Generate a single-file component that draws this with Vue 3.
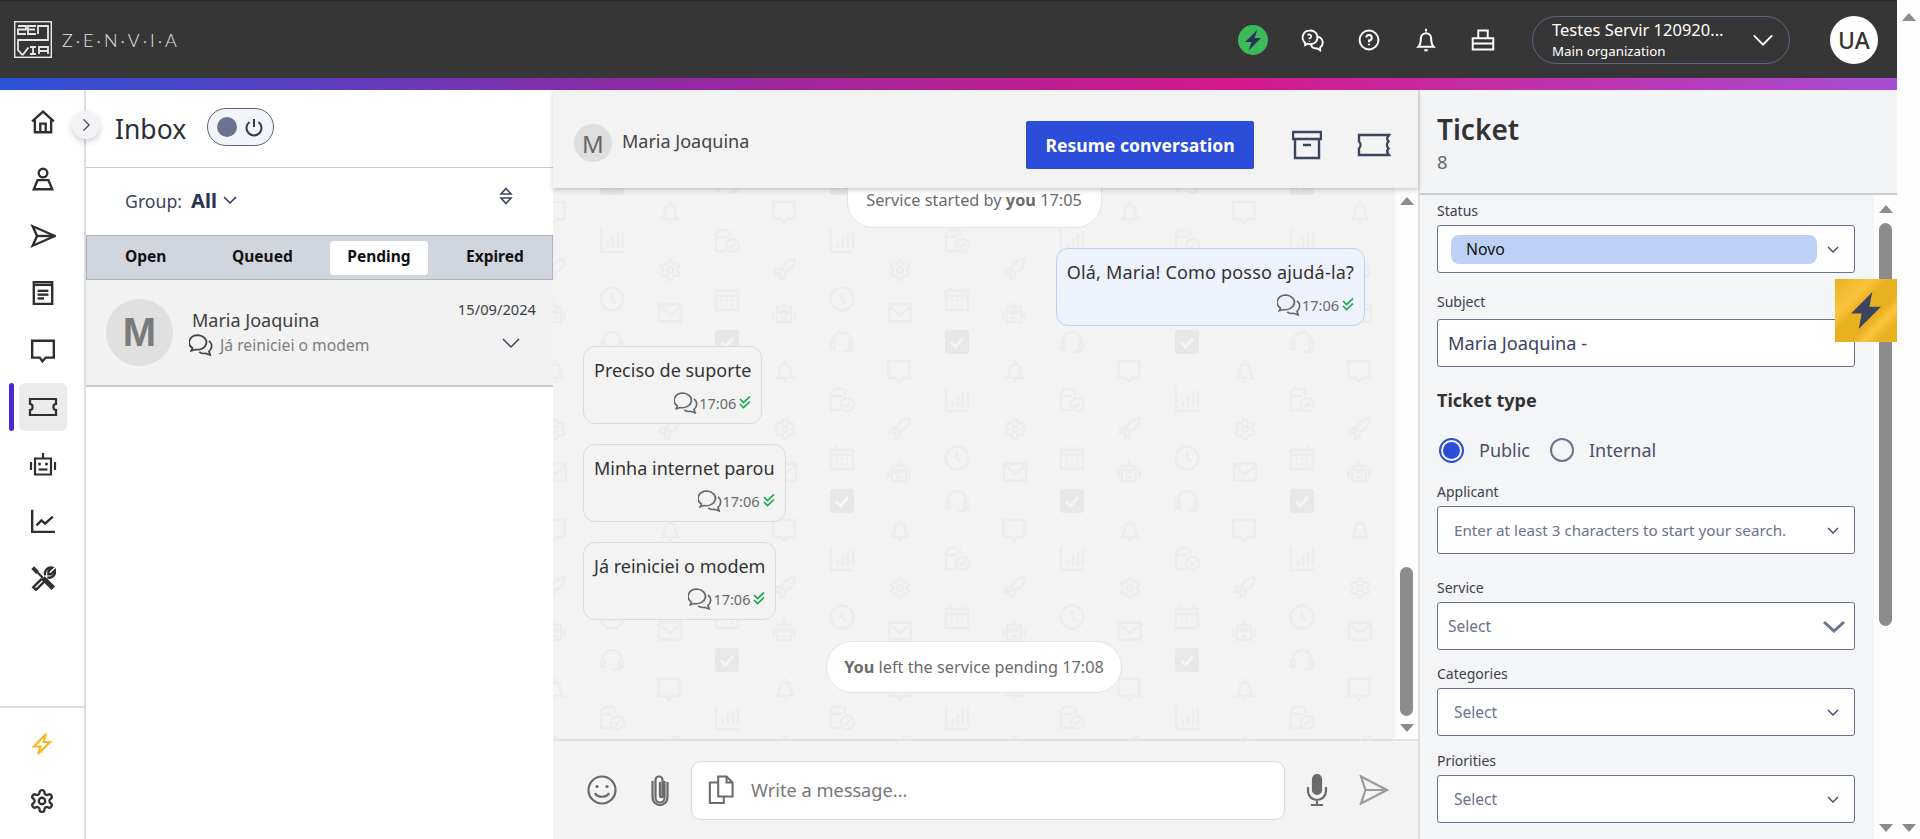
<script setup>
const tabs = [
  { label: 'Open', cls: 't-open' },
  { label: 'Queued', cls: 't-queued' },
  { label: 'Pending', cls: 't-pending' },
  { label: 'Expired', cls: 't-expired' }
]

const nav = [
  { key: 'home', w: 26, vb: '0 0 24 24', d: ['M2 11.5 12 2.5l10 9', 'M4.5 10v11.5h15V10', 'M9.5 21.5v-8h5v8'] },
  { key: 'person', w: 26, vb: '0 0 24 24', d: ['M12 2.5a4 4 0 1 0 0 8 4 4 0 0 0 0-8z', 'M7 13h10l3.5 8.5h-17z'] },
  { key: 'send', w: 26, vb: '0 0 24 24', d: ['M2.5 3 23 12 2.5 21 6.5 12z', 'M6.5 12H23'] },
  { key: 'doc', w: 26, vb: '0 0 24 24', d: ['M3.5 2h17v20h-17z', 'M3.5 4.5h17', 'M7 10h10', 'M7 13.5h10', 'M7 17h6'] },
  { key: 'chat', w: 28, vb: '0 0 24 24', d: ['M2 3.5h20v15.5h-7.5L11.5 22.5 9 19H2z'] },
  { key: 'ticket', w: 30, vb: '0 0 30 24', d: ['M2 4h26v5c-1.8 0-2.6 1.4-2.6 3s.8 3 2.6 3v5H2v-5c1.8 0 2.6-1.4 2.6-3S3.800 9 2 9z'], active: true },
  { key: 'robot', w: 30, vb: '0 0 30 24', d: ['M7 6.500h16v16H7z', 'M15 6.500V1', 'M3 10v8', 'M27 10v8', 'M10.500 17.500h9'], dots: true },
  { key: 'chart', w: 26, vb: '0 0 24 24', d: ['M2 1.500V22h21', 'M6 16l4.500-4.500 3.500 3L21 8'] },
  { key: 'tools', w: 26, vb: '0 0 24 24', d: ['M11 12.500 3 20.500l2.500 2.500 8-8', 'M14 9.500a5.500 5.500 0 0 1 6.500-7l-3.500 3.500v2.500h2.500l3.500-3.500a5.500 5.500 0 0 1-7 6.500'], tools: true }
]

const gearPath = 'M12.220 2h-.44a2 2 0 0 0-2 2v.18a2 2 0 0 1-1 1.730l-.43.25a2 2 0 0 1-2 0l-.15-.08a2 2 0 0 0-2.730.73l-.22.38a2 2 0 0 0 .73 2.730l.15.1a2 2 0 0 1 1 1.720v.51a2 2 0 0 1-1 1.740l-.15.09a2 2 0 0 0-.73 2.730l.22.38a2 2 0 0 0 2.730.73l.15-.08a2 2 0 0 1 2 0l.43.25a2 2 0 0 1 1 1.730V20a2 2 0 0 0 2 2h.44a2 2 0 0 0 2-2v-.18a2 2 0 0 1 1-1.730l.43-.25a2 2 0 0 1 2 0l.15.08a2 2 0 0 0 2.730-.73l.22-.39a2 2 0 0 0-.73-2.730l-.15-.08a2 2 0 0 1-1-1.740v-.5a2 2 0 0 1 1-1.740l.15-.09a2 2 0 0 0 .73-2.730l-.22-.38a2 2 0 0 0-2.730-.73l-.15.08a2 2 0 0 1-2 0l-.43-.25a2 2 0 0 1-1-1.730V4a2 2 0 0 0-2-2z M12 9a3 3 0 1 0 0 6 3 3 0 0 0 0-6z'

const glyphs = {
  bell: 'M12 1v2M4 19c1.500-2 3-3 3-9a5 5 0 0 1 10 0c0 6 1.500 7 3 9zM10.500 22h3',
  chat: 'M1.500 2h21v17h-7.500L12 23l-3-4H1.500z',
  chart: 'M1 0v23h23M8 19v-6M13 19V8M18 19V4M23 19V2',
  doc: 'M13 1H4l-3 4v17h10M15 1v6M1 8h11M17.500 10a6.500 6.500 0 1 0 0 13 6.500 6.500 0 0 0 0-13zM14.500 16.500l2 2 3.500-4',
  gear: gearPath,
  rocket: 'M22.500 1.500c-6-.5-10 3-13 9l4 4c6-3 9.500-7 9-13zM9.500 10.500l-6 1.500-1 4 5-1M13.500 14.500l-1.500 6-4 1 1-5M6 17a3 3 0 1 0-.1 0',
  clock: 'M12 0.500a11.500 11.500 0 1 0 0 23 11.500 11.500 0 0 0 0-23zM12 6v6.500l4 3.500',
  cal: 'M1 4h22v19H1zM1 9h22M6 0v5M18 0v5M6 13h2M11 13h2M16 13h2M6 18h2M11 18h2M16 18h2',
  mail: 'M1 3.500h22v17H1zM1 5l11 9 11-9',
  robot: 'M5 6h14v15H5zM12 6V1M1.500 10v8M22.500 10v8M8 11a1.500 1.500 0 1 0 3 0 1.500 1.500 0 0 0-3 0M13 11a1.500 1.500 0 1 0 3 0 1.500 1.500 0 0 0-3 0M9 17h6',
  headset: 'M3 14V11a9 9 0 0 1 18 0v3M1 12h3.500v7H1zM19.500 12H23v7h-3.500zM21 19v2.500h-8'
}

const halfA = [
  ['bell', 73, 12], ['chat', 187, 12], ['chart', 15, 41], ['doc', 130, 41],
  ['gear', 73, 70], ['rocket', 187, 70], ['clock', 15, 99], ['cal', 130, 99],
  ['mail', 73, 113], ['robot', 187, 113], ['headset', 15, 142], ['check', 130, 142]
]
const tile = [
  ...halfA,
  ...halfA.map(([n, x, y]) => [n, (x + 115) % 230, y + 159])
].map(([n, x, y]) => ({ n, t: `translate(${x - 12} ${y - 12})` }))

const incoming = [
  'Preciso de suporte',
  'Minha internet parou',
  'Já reiniciei o modem'
]
</script>

<template>
  <div class="root">
    <div class="page">
      <header class="topbar">
        <div class="brand">
          <svg class="logo" viewBox="0 0 38 37" fill="none" stroke="#e8e8e8" stroke-width="1.400">
            <rect x=".7" y=".7" width="36.600" height="35.600" />
            <path d="M4 5h8v3.500H4V13h8M22 5h-8v8h8M15 8.500h6M24 13V5h10v14H4v10l4 4.500h1l5.500-7M16 26h6M19 26v7M16 33h6M25 33v-7h9v7M25 30h9" stroke-width="1.800" />
          </svg>
          <span class="wordmark">Z·E·N·V·I·A</span>
        </div>
        <div class="top-actions">
          <span class="bolt-circle">
            <svg viewBox="0 0 24 24" width="24" height="24"><path d="M16.500 1.500 4 14h6.500l-3 8.500L20 10h-6.500z" fill="#2b3358" /></svg>
          </span>
          <svg class="ti" viewBox="0 0 28 28" fill="none" stroke="#fff" stroke-width="2.200">
            <path d="M11 3a8 8 0 0 0-5 14.200V20l3.200-1.800A8 8 0 1 0 11 3z" />
            <path d="M19.500 10a7 7 0 0 1 4 12.700V26l-3.500-2.200A7 7 0 0 1 12.500 19" />
            <path d="M8.800 8.700A2.300 2.300 0 1 1 11 12v1.200M11 15v.8" stroke-width="1.900" />
          </svg>
          <svg class="ti" viewBox="0 0 28 28" fill="none" stroke="#fff" stroke-width="2.300">
            <circle cx="14" cy="14" r="11" />
            <path d="M10.800 11a3.200 3.200 0 1 1 3.200 3.500V16.500M14 18.500v1.500" stroke-width="2.400" />
          </svg>
          <svg class="ti" viewBox="0 0 28 28" fill="none" stroke="#fff" stroke-width="2.300">
            <path d="M14 1v3M5 22c2-2 3-4 3-10a6 6 0 0 1 12 0c0 6 1 8 3 10zM12 26h4" />
          </svg>
          <svg class="ti" viewBox="0 0 28 28" fill="none" stroke="#fff" stroke-width="2.300">
            <path d="M8.500 12V3h11v9M2 12h24v6H2zM2 18v7h24v-7" />
          </svg>
        </div>
        <div class="org">
          <div class="org-text">
            <div class="org-name">Testes Servir 120920...</div>
            <div class="org-sub">Main organization</div>
          </div>
          <svg class="org-chev" viewBox="0 0 24 14" fill="none" stroke="#fff" stroke-width="2"><path d="M2 2l10 10L22 2" /></svg>
        </div>
        <div class="ua">UA</div>
      </header>
      <div class="rainbow"></div>

      <div class="workspace">
        <nav class="side">
          <div class="side-top">
            <div v-for="item in nav" :key="item.key" class="nav-row" :class="{ on: item.active }">
              <span v-if="item.active" class="mark"></span>
              <svg :viewBox="item.vb" :width="item.w" :height="26" fill="none" stroke="#2f2f2f" stroke-width="2.200" stroke-linejoin="miter">
                <path v-for="(p, i) in item.d" :key="i" :d="p" />
                <template v-if="item.dots">
                  <circle cx="11.500" cy="12" r="1.500" fill="#2f2f2f" stroke="none" />
                  <circle cx="18.500" cy="12" r="1.500" fill="#2f2f2f" stroke="none" />
                </template>
                <template v-if="item.tools">
                  <path d="M2.500 2.500 7 7" stroke-width="3.600" />
                  <path d="M7 7l5 5" stroke-width="2" />
                  <path d="M12 12l9.500 9.500" stroke-width="4.600" />
                </template>
              </svg>
            </div>
          </div>
          <div class="side-bottom">
            <svg class="side-bolt" viewBox="0 0 24 24" width="24" height="24" fill="none" stroke="#f5b921" stroke-width="2.200" stroke-linejoin="miter">
              <path d="M16 2 4 14.500h6.500L8 22l12-12h-6.500z" />
            </svg>
            <svg viewBox="0 0 24 24" width="26" height="26" fill="none" stroke="#2f2f2f" stroke-width="2.100"><path :d="gearPath" /></svg>
          </div>
        </nav>

        <section class="inbox">
          <button class="expand">
            <svg viewBox="0 0 10 16" width="9" height="14" fill="none" stroke="#3a3a3a" stroke-width="1.400"><path d="M1.500 1.500 8 8l-6.500 6.500" /></svg>
          </button>
          <div class="inbox-head">
            <h1>Inbox</h1>
            <div class="toggle">
              <span class="dot"></span>
              <svg viewBox="0 0 20 20" width="20" height="20" fill="none" stroke="#333a52" stroke-width="2"><path d="M10 2v8M5.500 5a7.500 7.500 0 1 0 9 0" /></svg>
            </div>
          </div>
          <div class="group">
            <span class="g-label">Group:</span>
            <span class="g-all">All</span>
            <svg viewBox="0 0 14 9" width="14" height="9" fill="none" stroke="#2a3350" stroke-width="1.500"><path d="M1 1l6 6 6-6" /></svg>
            <svg class="sort" viewBox="0 0 14 18" width="14" height="18" fill="none" stroke="#3d4460" stroke-width="1.600">
              <path d="M7 1.500 12 7H2z" />
              <path d="M2 11h10l-5 5.500z" />
            </svg>
          </div>
          <div class="tabs">
            <span v-for="t in tabs" :key="t.label" class="tab" :class="t.cls">{{ t.label }}</span>
          </div>
          <div class="conv">
            <div class="conv-av">M</div>
            <div class="conv-main">
              <div class="conv-name">Maria Joaquina</div>
              <div class="conv-prev">
                <svg viewBox="2 2 21 21" width="24" height="22" fill="none" stroke="#444" stroke-width="1.600" preserveAspectRatio="none">
                  <path d="M10 3a8 7 0 0 0-5 12.400L4 18l3.500-1.200A8 7 0 1 0 10 3z" />
                  <path d="M19.500 8.500a6.500 6.500 0 0 1 0 10l1 3.500-4-1.500a6.500 6.500 0 0 1-5.500-1.500" />
                </svg>
                <span>Já reiniciei o modem</span>
              </div>
            </div>
            <div class="conv-date">15/09/2024</div>
            <svg class="conv-chev" viewBox="0 0 18 11" width="18" height="11" fill="none" stroke="#3d4460" stroke-width="1.500"><path d="M1 1l8 8 8-8" /></svg>
          </div>
        </section>

        <section class="chat">
          <div class="chat-head">
            <div class="chat-av">M</div>
            <div class="chat-name">Maria Joaquina</div>
            <button class="resume">Resume conversation</button>
            <svg class="ch-ic" viewBox="0 0 30 30" width="30" height="30" fill="none" stroke="#3d4460" stroke-width="2.400">
              <path d="M1 2h28v7H1zM3 9v19h24V9M11 15h8" />
            </svg>
            <svg class="ch-ic2" viewBox="0 0 34 24" width="34" height="24" fill="none" stroke="#3d4460" stroke-width="2.400">
              <path d="M2 2h30c-1.800 2.200-2.600 3.500-.5 6.500-2 2-2 5 0 7-1.800 2-1.500 4.500.5 6.500H2v-6.500c2-2 2-5 0-7z" />
            </svg>
          </div>
          <div class="chat-body">
            <svg class="wall" width="842" height="552" aria-hidden="true">
              <defs>
                <pattern id="wall" x="44" y="12" width="230" height="318" patternUnits="userSpaceOnUse">
                  <g v-for="(it, i) in tile" :key="i" :transform="it.t">
                    <template v-if="it.n === 'check'">
                      <rect width="24" height="24" rx="3" fill="#e8e8e8" />
                      <path d="M6 12.500l4.500 4.500L18 8" fill="none" stroke="#f5f5f5" stroke-width="3" />
                    </template>
                    <path v-else :d="glyphs[it.n]" fill="none" stroke="#ececec" stroke-width="2.400" />
                  </g>
                </pattern>
              </defs>
              <rect width="842" height="552" fill="url(#wall)" />
            </svg>
            <div class="msgs">
              <div class="pill pill-first">Service started by <b>you</b> 17:05</div>
              <div class="bubble out">
                <div class="b-text">Olá, Maria! Como posso ajudá-la?</div>
                <div class="meta">
                  <svg viewBox="2 2 21 21" width="24" height="22" fill="none" stroke="#666" stroke-width="1.500" preserveAspectRatio="none">
                    <path d="M10 3a8 7 0 0 0-5 12.400L4 18l3.500-1.200A8 7 0 1 0 10 3z" />
                    <path d="M19.500 8.500a6.500 6.500 0 0 1 0 10l1 3.500-4-1.500a6.500 6.500 0 0 1-5.500-1.500" />
                  </svg>
                  <span>17:06</span>
                  <svg class="tick" viewBox="0 0 12 14" width="12" height="14" fill="none" stroke="#19a94a" stroke-width="1.700"><path d="M1 3l3.500 3.500L11 0.500M1 8l3.500 3.500L11 5.500" /></svg>
                </div>
              </div>
              <div v-for="m in incoming" :key="m" class="bubble in">
                <div class="b-text">{{ m }}</div>
                <div class="meta">
                  <svg viewBox="2 2 21 21" width="24" height="22" fill="none" stroke="#666" stroke-width="1.500" preserveAspectRatio="none">
                    <path d="M10 3a8 7 0 0 0-5 12.400L4 18l3.500-1.200A8 7 0 1 0 10 3z" />
                    <path d="M19.500 8.500a6.500 6.500 0 0 1 0 10l1 3.500-4-1.500a6.500 6.500 0 0 1-5.500-1.500" />
                  </svg>
                  <span>17:06</span>
                  <svg class="tick" viewBox="0 0 12 14" width="12" height="14" fill="none" stroke="#19a94a" stroke-width="1.700"><path d="M1 3l3.500 3.500L11 0.500M1 8l3.500 3.500L11 5.500" /></svg>
                </div>
              </div>
              <div class="pill pill-last"><b>You</b> left the service pending 17:08</div>
            </div>
            <div class="vbar chat-bar">
              <i class="up"></i>
              <div class="track"><b class="thumb"></b></div>
              <i class="down"></i>
            </div>
          </div>
          <div class="composer">
            <svg viewBox="0 0 30 30" width="30" height="30" fill="none" stroke="#6b6b6b" stroke-width="2.200">
              <circle cx="15" cy="15" r="13.500" />
              <circle cx="10" cy="11.500" r="1.600" fill="#6b6b6b" stroke="none" />
              <circle cx="20" cy="11.500" r="1.600" fill="#6b6b6b" stroke="none" />
              <path d="M8 18c2 5 12 5 14 0" />
            </svg>
            <svg class="clip" viewBox="0 0 20 32" width="20" height="32" fill="none" stroke="#6b6b6b" stroke-width="2.200">
              <path d="M14 7v17a4.500 4.500 0 0 1-9 0V6a3 3 0 0 1 7 0v16a1.200 1.200 0 0 1-2.500 0V8" transform="translate(.5 0)" />
              <path d="M17.500 8v15.500a7.500 7.500 0 0 1-15 0V7" />
            </svg>
            <div class="input">
              <svg viewBox="0 0 28 32" width="26" height="30" fill="none" stroke="#6b6b6b" stroke-width="2.200">
                <path d="M11 1.500h9l6.500 6.500v15H11z M20 1.500V8h6.500" />
                <path d="M11 8H2v22h15v-7" />
              </svg>
              <span>Write a message...</span>
            </div>
            <svg class="mic" viewBox="0 0 24 32" width="24" height="32" fill="none" stroke="#6b6b6b" stroke-width="2.200">
              <rect x="8" y="1" width="8" height="19" rx="4" fill="#6b6b6b" />
              <path d="M3 13v4a9 9 0 0 0 18 0v-4M12 26v5M6 31h12" />
            </svg>
            <svg class="snd" viewBox="0 0 30 30" width="30" height="30" fill="none" stroke="#9b9b9b" stroke-width="2.200">
              <path d="M2 1.500 28 15 2 28.500 6.500 15zM6.500 15H28" />
            </svg>
          </div>
        </section>

        <section class="ticket">
          <div class="ticket-main">
            <div class="ticket-head">
              <h2>Ticket</h2>
              <div class="num">8</div>
            </div>
            <div class="form">
              <label class="lab first">Status</label>
              <div class="box status">
                <span class="chip">Novo</span>
                <svg class="chev" viewBox="0 0 12 8" width="12" height="8" fill="none" stroke="#3d4460" stroke-width="1.300"><path d="M1 1l5 5 5-5" /></svg>
              </div>
              <label class="lab l-subject">Subject</label>
              <div class="box subject">Maria Joaquina -</div>
              <div class="ttype">Ticket type</div>
              <div class="radios">
                <span class="radio sel"><i></i></span>
                <span class="r-lab">Public</span>
                <span class="radio"></span>
                <span class="r-lab">Internal</span>
              </div>
              <label class="lab l-app">Applicant</label>
              <div class="box indent ph">
                Enter at least 3 characters to start your search.
                <svg class="chev" viewBox="0 0 12 8" width="12" height="8" fill="none" stroke="#3d4460" stroke-width="1.300"><path d="M1 1l5 5 5-5" /></svg>
              </div>
              <label class="lab l-service">Service</label>
              <div class="box svc">
                Select
                <svg class="big-chev" viewBox="0 0 24 14" width="24" height="14" fill="none" stroke="#6b7390" stroke-width="3"><path d="M2 2l10 9 10-9" /></svg>
              </div>
              <label class="lab l-cat">Categories</label>
              <div class="box indent sel-ph">
                Select
                <svg class="chev" viewBox="0 0 12 8" width="12" height="8" fill="none" stroke="#3d4460" stroke-width="1.300"><path d="M1 1l5 5 5-5" /></svg>
              </div>
              <label class="lab l-pri">Priorities</label>
              <div class="box indent sel-ph">
                Select
                <svg class="chev" viewBox="0 0 12 8" width="12" height="8" fill="none" stroke="#3d4460" stroke-width="1.300"><path d="M1 1l5 5 5-5" /></svg>
              </div>
            </div>
            <div class="gold">
              <svg viewBox="0 0 32 38" width="31" height="37"><path d="M22 0 0 22h11L8 38 31 15H19z" fill="#3d4460" /></svg>
            </div>
          </div>
          <div class="vbar form-bar">
            <i class="up"></i>
            <div class="track"><b class="thumb"></b></div>
            <i class="down"></i>
          </div>
        </section>
      </div>
    </div>
    <div class="vbar page-bar">
      <i class="up"></i>
      <div class="track"></div>
      <i class="down"></i>
    </div>
  </div>
</template>

<style>
html, body { margin: 0; overflow: hidden; background: #fff; }
</style>

<style scoped>
* { box-sizing: border-box; }
.root { display: flex; width: 1920px; height: 839px; overflow: hidden; font-family: "Noto Sans", "Open Sans", sans-serif; color: #333; }
.page { width: 1897px; display: flex; flex-direction: column; height: 839px; }

.topbar { height: 78px; background: #363636; border-top: 1px solid #2a2a2a; display: flex; align-items: center; padding: 0 19px 0 14px; color: #fff; }
.brand { display: flex; align-items: center; gap: 10px; }
.logo { width: 38px; height: 37px; }
.wordmark { font-family: "Lato", sans-serif; font-size: 18px; letter-spacing: 3px; color: #e4e4e4; font-weight: 300; }
.top-actions { margin-left: auto; display: flex; align-items: center; }
.bolt-circle { width: 30px; height: 30px; border-radius: 50%; background: #3cb95a; display: flex; align-items: center; justify-content: center; margin-right: 32px; }
.ti { width: 24px; height: 24px; margin-right: 33px; }
.ti:last-child { margin-right: 0; }
.org { margin-left: 37px; width: 258px; height: 48px; border: 1px solid #5c6480; border-radius: 24px; display: flex; align-items: center; padding-left: 19px; }
.org-text { flex: 1; }
.org-name { font-size: 16.500px; line-height: 22px; }
.org-sub { font-size: 13.300px; line-height: 18px; margin-top: 1px; }
.org-chev { width: 22px; height: 14px; margin-right: 15px; }
.ua { margin-left: 40px; width: 48px; height: 48px; border-radius: 50%; background: #fff; color: #333; font-size: 23px; font-weight: 500; display: flex; align-items: center; justify-content: center; }

.rainbow { height: 12px; background: linear-gradient(90deg, #2b52d8 0%, #8a2ca6 32%, #d6198c 65%, #a74dd2 100%); }
.workspace { flex: 1; display: flex; min-height: 0; }

.side { width: 86px; border-right: 2px solid #dcdce2; display: flex; flex-direction: column; justify-content: space-between; background: #fff; }
.side-top { padding-top: 3.500px; display: flex; flex-direction: column; }
.nav-row { position: relative; height: 48px; margin: 4.500px 0 4.500px 19px; width: 48px; display: flex; align-items: center; justify-content: center; border-radius: 6px; }
.nav-row.on { background: #ebebeb; }
.mark { position: absolute; left: -10px; top: 0; width: 5px; height: 48px; border-radius: 3px; background: #4a28d8; }
.side-bottom { height: 133px; border-top: 2px solid #dcdce2; display: flex; flex-direction: column; align-items: center; padding-top: 24px; gap: 32px; }

.inbox { position: relative; width: 467px; display: flex; flex-direction: column; background: #fff; }
.expand { position: absolute; left: -14px; top: 21px; width: 28px; height: 28px; border-radius: 50%; border: 0; background: #f2f3f6; box-shadow: 0 3px 6px rgba(0,0,0,.18); display: flex; align-items: center; justify-content: center; padding: 0; z-index: 3; }
.inbox-head { height: 78px; border-bottom: 1px solid #c4c7ce; display: flex; align-items: center; padding: 0 0 0 29px; }
.inbox-head h1 { margin: 0; font-size: 26.500px; font-weight: 400; color: #2c2f3a; width: 72px; }
.toggle { margin-left: 20px; width: 67px; height: 38px; margin-top: -4px; border: 1px solid #5c6480; border-radius: 19px; background: #f3f4f7; display: flex; align-items: center; justify-content: space-between; padding: 0 9px; }
.dot { width: 20px; height: 20px; border-radius: 50%; background: #6b7390; }
.group { height: 67px; display: flex; align-items: center; padding: 0 0 2px 39px; position: relative; }
.g-label { font-size: 17.700px; color: #3d4460; }
.g-all { font-size: 20px; font-weight: 700; color: #2a3350; margin: 0 6px 0 9px; }
.sort { position: absolute; left: 413px; top: 19px; }
.tabs { position: relative; height: 45px; background: #d1d5de; border: 1px solid #aeb2bd; }
.tab { position: absolute; top: 5px; height: 34px; line-height: 30px; font-size: 15.500px; font-weight: 700; color: #111; border-radius: 4px; text-align: center; }
.t-open { left: 20px; width: 80px; text-align: left; padding-left: 18px; }
.t-queued { left: 145px; }
.t-pending { left: 243px; width: 98px; background: #fff; }
.t-expired { left: 379px; }
.conv { position: relative; height: 107px; background: #f2f2f2; border-bottom: 2px solid #c9cbd0; display: flex; padding-left: 20px; padding-top: 19px; }
.conv-av { width: 67px; height: 67px; border-radius: 50%; background: #e0e0e0; color: #7a7a7a; font-family: "Liberation Sans", sans-serif; font-weight: 700; font-size: 40px; display: flex; align-items: center; justify-content: center; }
.conv-main { margin-left: 19px; padding-top: 8px; }
.conv-name { font-size: 18px; line-height: 26px; color: #3d4048; }
.conv-prev { display: flex; align-items: center; gap: 7px; font-size: 15.700px; color: #7e7e7e; margin-left: -3px; margin-top: 1px; }
.conv-date { position: absolute; right: 17px; top: 19px; font-size: 14.700px; color: #3d4048; }
.conv-chev { position: absolute; left: 416px; top: 58px; }

.chat { width: 865px; display: flex; flex-direction: column; background: #f3f3f3; }
.chat-head { position: relative; z-index: 2; height: 98px; background: #f3f3f3; box-shadow: 0 2px 5px rgba(0,0,0,.2); display: flex; align-items: center; padding: 0 27px 0 21px; }
.chat-av { width: 38px; height: 38px; border-radius: 50%; background: #dedede; color: #666; font-size: 24px; display: flex; align-items: center; justify-content: center; margin-top: 8px; }
.chat-name { margin-left: 10px; font-size: 18px; color: #444; margin-top: 4px; }
.resume { margin-left: auto; width: 228px; height: 48px; margin-top: 12px; background: #2b4dd9; color: #fff; border: 0; border-radius: 2px; font-family: inherit; font-size: 17.600px; font-weight: 700; }
.ch-ic { margin-left: 38px; margin-top: 12px; }
.ch-ic2 { margin-left: 35px; margin-top: 12px; }
.chat-body { position: relative; flex: 1; display: flex; min-height: 0; border-bottom: 2px solid #e2e2e2; }
.wall { position: absolute; left: 0; top: 0; }
.msgs { position: relative; width: 842px; display: flex; flex-direction: column; padding: 0 30px; }
.pill { align-self: center; background: #fff; border: 1px solid #e4e4e4; border-radius: 26px; color: #6b6b6b; font-size: 16.300px; display: flex; align-items: center; justify-content: center; white-space: pre-wrap; }
.pill b { font-weight: 700; }
.pill-first { margin-top: -8px; width: 255px; height: 48px; padding-bottom: 8px; border-radius: 0 0 26px 26px / 0 0 26px 26px; }
.pill-last { margin-top: 21px; width: 296px; height: 52px; }
.bubble { display: inline-flex; flex-direction: column; border-radius: 12px; padding: 10px 10px 0; height: 78px; margin-top: 20px; }
.bubble.out { align-self: flex-end; background: #eef2fd; border: 1px solid #bcd0f7; }
.bubble.out .b-text { letter-spacing: .19px; }
.bubble.in { align-self: flex-start; background: #f3f3f3; border: 1px solid #dcdcdc; }
.b-text { font-size: 18px; line-height: 26px; color: #333; white-space: nowrap; }
.meta { display: flex; align-items: center; justify-content: flex-end; gap: 1px; font-size: 14.500px; color: #6b6b6b; margin-top: 9px; }
.tick { margin-left: 2px; }
.vbar { display: flex; flex-direction: column; align-items: center; background: #fdfdfd; width: 23px; flex-shrink: 0; }
.vbar .up { width: 0; height: 0; border-left: 7.500px solid transparent; border-right: 7.500px solid transparent; border-bottom: 8px solid #8c8c8c; }
.vbar .down { width: 0; height: 0; border-left: 7.500px solid transparent; border-right: 7.500px solid transparent; border-top: 8px solid #8c8c8c; }
.vbar .track { flex: 1; width: 100%; position: relative; }
.thumb { position: absolute; left: 5px; width: 13px; background: #8c8c8c; border-radius: 7px; }
.chat-bar { position: relative; padding: 9px 0 7px; }
.chat-bar .thumb { top: 362px; height: 149px; }
.form-bar { padding: 115px 0 7px; height: 749px; }
.form-bar .thumb { top: 10px; height: 403px; }
.page-bar { padding: 13px 0 7px; height: 839px; }

.composer { height: 98px; padding: 0 0 0 34px; display: flex; align-items: center; }
.clip { margin-left: 33px; }
.input { margin-left: 21px; width: 594px; height: 59px; background: #fff; border: 1px solid #d8d8d8; border-radius: 10px; display: flex; align-items: center; padding-left: 16px; gap: 17px; font-size: 18.200px; color: #777; }
.mic { margin-left: 20px; }
.snd { margin-left: 30px; }

.ticket { position: relative; flex: 1; display: flex; background: #f4f5f7; border-left: 2px solid #e0e0e0; min-width: 0; }
.ticket-main { position: relative; flex: 1; min-width: 0; }
.ticket-head { height: 105px; border-bottom: 2px solid #c9ccd4; padding: 18px 0 0 17px; margin-right: -23px; background: #f3f4f6; position: relative; z-index: 1; }
.ticket-head h2 { margin: 0; font-size: 28px; line-height: 42px; font-weight: 600; color: #333; }
.num { font-size: 18.500px; line-height: 24px; color: #666; margin-top: 0; }
.form { padding: 0 19px 0 17px; color: #333; }
.lab { display: block; font-size: 14px; line-height: 20px; color: #3d4048; }
.first { margin-top: 6px; }
.box { position: relative; height: 48px; background: #fff; border: 1px solid #6b7390; border-radius: 3px; display: flex; align-items: center; margin-top: 4px; }
.status { padding-left: 13px; margin-top: 4px; }
.chip { width: 366px; height: 29px; background: #bdd1f7; border-radius: 8px; display: flex; align-items: center; padding-left: 15px; font-size: 15.800px; color: #111; }
.chev { position: absolute; right: 15px; top: 20px; }
.l-subject { margin-top: 19px; }
.subject { padding-left: 10px; font-size: 18.200px; color: #3d4460; margin-top: 7px; }
.ttype { margin-top: 19px; font-size: 18px; line-height: 28px; font-weight: 700; color: #333; }
.radios { display: flex; align-items: center; margin-top: 23px; height: 26px; padding-left: 2px; }
.radio { width: 24px; height: 24px; border-radius: 50%; border: 2px solid #6b7390; background: transparent; display: flex; align-items: center; justify-content: center; flex-shrink: 0; }
.radio.sel { border-color: #2b4dd9; width: 25px; height: 25px; }
.radio.sel i { width: 17px; height: 17px; border-radius: 50%; background: #2b4dd9; }
.r-lab { font-size: 18px; color: #4a506a; margin: 0 20px 0 15px; }
.l-app { margin-top: 19px; }
.box.indent { padding-left: 16px; font-size: 15.200px; color: #6b7390; margin-top: 4px; }
.l-service { margin-top: 24px; }
.svc { padding-left: 10px; font-size: 15.500px; color: #6b7390; margin-top: 4px; }
.big-chev { position: absolute; right: 8px; top: 17px; }
.l-cat { margin-top: 14px; }
.l-pri { margin-top: 15px; }
.sel-ph { font-size: 15.500px !important; }
.gold { position: absolute; right: -23px; top: 189px; width: 62px; height: 63px; background: linear-gradient(135deg, #e9b020 0%, #fcc43f 30%, #e9b020 42%, #e9b020 62%, #fcc43f 72%, #e9b020 85%); display: flex; align-items: center; justify-content: center; z-index: 5; }
</style>
